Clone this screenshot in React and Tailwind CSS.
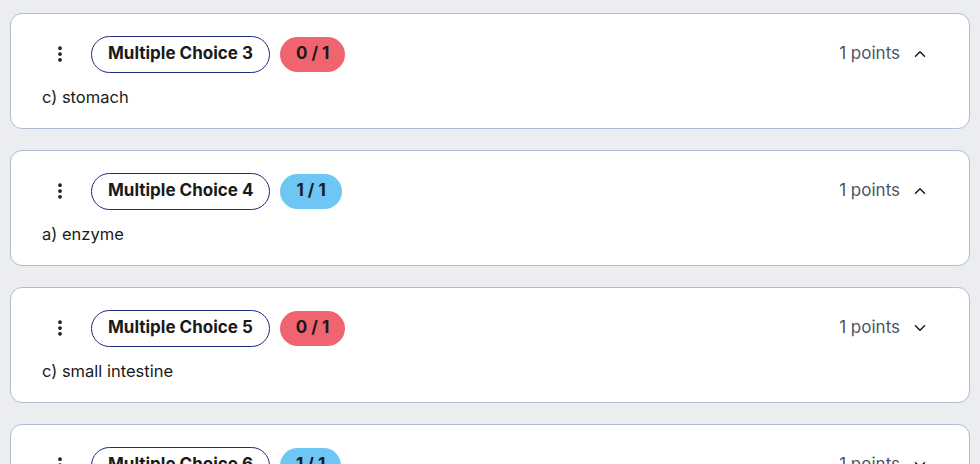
import { MoreVertical, ChevronUp, ChevronDown } from 'lucide-react'

const QUESTIONS = [
  { n: 3, score: 0, answer: 'c) stomach', open: true },
  { n: 4, score: 1, answer: 'a) enzyme', open: true },
  { n: 5, score: 0, answer: 'c) small intestine', open: false },
  { n: 6, score: 1, answer: 'b) liver', open: false },
]

export default function App() {
  return (
    <div
      className="bg-[#ebedf0] px-[10px] pt-[13px] flex flex-col gap-[21px] h-[464px] overflow-hidden"
      style={{ fontFamily: 'Inter, "Open Sans", sans-serif' }}
    >
      {QUESTIONS.map(q => (
        <QuestionCard key={q.n} q={q} />
      ))}
    </div>
  )
}

function QuestionCard({ q }) {
  const correct = q.score > 0
  return (
    <div className="shrink-0 bg-white border border-[#aebdd0] rounded-[12px] pl-[31px] pr-[29px] pt-[22px] pb-[19px]">
      {/* Header */}
      <div className="flex items-center h-[36px]">
        <button className="w-[36px] h-[36px] flex items-center justify-center text-[#1a1a1a]">
          <MoreVertical size={20} strokeWidth={2.5} />
        </button>
        <span className="ml-[13px] h-[37px] px-[16px] flex items-center border border-[#1f2a7a] rounded-full text-[17px] font-bold text-[#1a1a1a]">
          Multiple Choice {q.n}
        </span>
        <span
          className={`ml-[10px] h-[35px] px-[16px] flex items-center rounded-full text-[17px] font-bold text-[#1a1a1a] ${
            correct ? 'bg-[#6ec6f5]' : 'bg-[#f0646f]'
          }`}
        >
          {q.score} / 1
        </span>
        <span className="ml-auto text-[17px] text-[#4b5563]">1 points</span>
        <button className="w-[40px] h-[36px] flex items-center justify-center text-[#1a1a1a]">
          {q.open ? <ChevronUp size={18} strokeWidth={2} /> : <ChevronDown size={18} strokeWidth={2} />}
        </button>
      </div>

      {/* Answer */}
      <div className="mt-[13px] text-[16.5px] leading-[24px] text-[#1a1a1a]">{q.answer}</div>
    </div>
  )
}
